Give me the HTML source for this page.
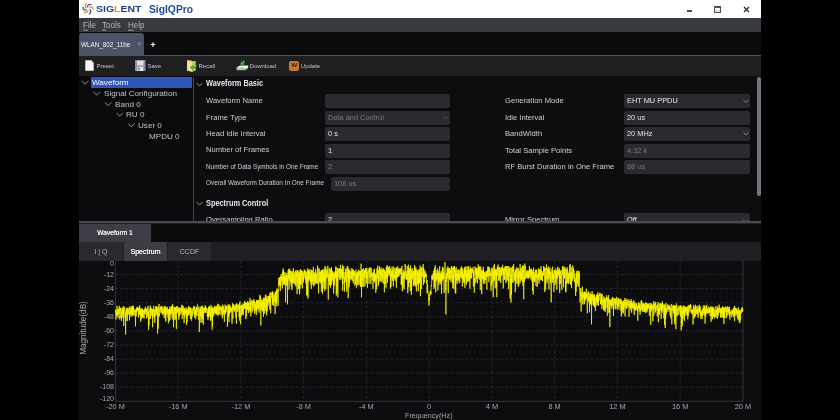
<!DOCTYPE html>
<html><head><meta charset="utf-8">
<style>
*{margin:0;padding:0;box-sizing:border-box}
html,body{width:840px;height:420px;overflow:hidden;background:#000}
body{position:relative;font-family:"Liberation Sans",sans-serif}
.a{position:absolute;white-space:nowrap}
#app{position:absolute;left:79px;top:0;width:682px;height:420px;background:#0d0d10;overflow:hidden;will-change:transform}
/* everything inside uses page coords via offset wrapper */
.pg{position:absolute;left:-79px;top:0;width:840px;height:420px}
.hdr{left:79px;top:0;width:682px;height:18px;background:#fff}
.menu{left:79px;top:18px;width:682px;height:14px;background:#373b3f}
.mi{top:19.2px;height:14px;line-height:14px;font-size:8px;color:#b4b8bd;transform:scaleY(1.2)}
.mi u{text-decoration:underline;text-decoration-color:#8a8e93;text-underline-offset:1px;text-decoration-thickness:0.8px}
.tabbar{left:79px;top:32px;width:682px;height:23px;background:#0c0c0e}
.tab{left:79px;top:33px;width:65px;height:22px;background:#4a5466;border-radius:3px 3px 0 0}
.tabline{left:79px;top:55px;width:682px;height:1px;background:#4a5466}
.toolbar{left:79px;top:56px;width:682px;height:20px;background:#1f1f22}
.tl{top:60px;height:12px;line-height:12px;font-size:6px;color:#c4c4c8}
.tree{left:79px;top:76px;width:114px;height:146px;background:#0b0b0d}
.vdiv{left:193.2px;top:76.5px;width:1.3px;height:146px;background:#45474f}
.tr{height:11px;line-height:11px;font-size:8.1px;color:#c2c2c6}
.chev{width:6px;height:6px}
.sel{left:91px;top:77px;width:101.2px;height:11px;background:#2f55b6}
.set{left:194px;top:76px;width:567px;height:146px;background:#0d0d10}
.lb{height:12px;line-height:12px;font-size:7.6px;color:#d0d0d4}
.lbs{height:12px;line-height:12px;font-size:6.4px;color:#d0d0d4}
.hd{height:12px;line-height:12px;font-size:8.2px;font-weight:bold;color:#e8e8ec;transform:scaleX(0.9);transform-origin:0 50%}
.inp{height:14px;background:#2a2a2f;border-radius:2px;font-size:7.4px;line-height:14px;padding-left:3px;color:#e6e6ea}
.dis{color:#78787e}
.scroll{left:757px;top:77px;width:3.6px;height:119px;background:#74767e;border-radius:2px}
.hdiv{left:79px;top:221px;width:682px;height:2px;background:#474b53}
.btabs{left:79px;top:223px;width:682px;height:19px;background:#0b0b0d;border-top:1px solid #222328}
.wtab{left:79px;top:224px;width:72px;height:18px;background:#3e3f46;font-size:6.6px;line-height:18px;text-align:center;color:#f4f4f6;text-shadow:0 0 0.3px #fff}
.stabs{left:79px;top:242px;width:682px;height:19px;background:#1f1f23}
.st{top:242px;height:19px;line-height:19.5px;font-size:7px;text-align:center;color:#b8b8bc;background:#2a2a2e}
.chart{left:79px;top:261px;width:682px;height:159px;background:#0d0d10}
.yl{position:absolute;left:74px;width:40px;text-align:right;font-size:7px;line-height:10px;color:#a8a8ac}
.xl{position:absolute;top:402px;width:60px;text-align:center;font-size:7.4px;line-height:10px;color:#a8a8ac}
</style></head><body>
<div id="app"><div class="pg">
<div class="a hdr"></div>
<!-- logo -->
<svg class="a" style="left:0;top:0" width="840" height="20" viewBox="0 0 840 20">
 <g fill="none" stroke-width="1.3" stroke-linecap="round">
<path d="M86.04 8.05 Q84.08 5.90 86.52 3.73" stroke="#f0902a"/>
<path d="M87.42 6.78 Q87.95 3.92 91.16 4.57" stroke="#2f5aa8"/>
<path d="M89.35 7.19 Q92.02 6.04 93.27 9.05" stroke="#f0902a"/>
<path d="M89.93 9.62 Q91.82 11.83 89.30 13.92" stroke="#2f5aa8"/>
<path d="M88.00 10.90 Q86.70 13.50 83.80 12.00" stroke="#f0902a"/>
<path d="M86.30 10.03 Q83.43 10.51 82.94 7.28" stroke="#2f5aa8"/>
 </g>
</svg>
<div class="a" style="left:95.5px;top:3px;height:12px;line-height:12px;font-size:9.8px;font-weight:bold;color:#1f3f8c;transform-origin:0 50%;transform:scaleX(1.07)">SIG<span style="color:#ee8a22">L</span>ENT</div>
<div class="a" style="left:148.5px;top:2px;height:14px;line-height:14px;font-size:11.2px;font-weight:bold;color:#1f4c9c;transform-origin:0 50%;transform:scaleX(0.92)">SigIQPro</div>
<!-- window controls -->
<div class="a" style="left:687px;top:10.2px;width:5px;height:1.8px;background:#4a4a4a"></div>
<div class="a" style="left:714.2px;top:5.8px;width:7px;height:6.8px;border:1px solid #505050;border-top-width:2px;background:linear-gradient(#fff,#d8d8d8)"></div>
<svg class="a" style="left:743px;top:6px" width="7" height="7" viewBox="0 0 7 7"><path d="M1 1L6 6M6 1L1 6" stroke="#2a2a2a" stroke-width="1.3"/></svg>

<div class="a menu"></div>
<div class="a mi" style="left:83px"><u>F</u>ile</div>
<div class="a mi" style="left:102px"><u>T</u>ools</div>
<div class="a mi" style="left:128px"><u>H</u>elp</div>

<div class="a tabbar"></div>
<div class="a tab"></div>
<div class="a" style="left:81px;top:38.5px;height:12px;line-height:12px;font-size:6.3px;color:#f0f0f4">WLAN_802_11be</div>
<div class="a" style="left:137.3px;top:38.3px;height:12px;line-height:12px;font-size:7.6px;color:#9aa0a8">×</div>
<div class="a" style="left:150.5px;top:38.5px;height:12px;line-height:12px;font-size:8.5px;font-weight:bold;color:#fff">+</div>
<div class="a tabline"></div>

<div class="a toolbar"></div>
<!-- preset icon -->
<svg class="a" style="left:85px;top:60px" width="9" height="11" viewBox="0 0 9 11"><path d="M0.3 0.3H6.2L8.7 2.8V10.7H0.3Z" fill="#f6f6f6"/><path d="M6.2 0.3V2.8H8.7" fill="#cfcfcf"/></svg>
<div class="a tl" style="left:96.5px">Preset</div>
<!-- save icon -->
<svg class="a" style="left:135px;top:60px" width="10.5" height="11" viewBox="0 0 10.5 11"><rect x="0" y="0" width="10.5" height="11" rx="0.8" fill="#7f93b4"/><rect x="2" y="0.8" width="6.5" height="4.6" fill="#f6d8d0"/><rect x="2.2" y="6.8" width="6" height="4.2" fill="#e6e8ee"/><rect x="3.2" y="7.6" width="1.4" height="2.6" fill="#56606e"/></svg>
<div class="a tl" style="left:147.5px">Save</div>
<!-- recall icon -->
<svg class="a" style="left:186px;top:59px" width="12" height="14" viewBox="0 0 12 14">
 <path d="M1 1.2H5.5L6.2 2H9.5V11.5H1Z" fill="#c9a449"/>
 <path d="M1 1.2L6 2.8V13L1 11.5Z" fill="#f3df8e"/>
 <path d="M6 2.8L9.5 2V11.5L6 13Z" fill="#dcbb5c"/>
 <path d="M10.8 5.2C10.8 8 9.4 9.6 7.2 9.8V11.4L3.8 8.4L7.2 5.4V7.2C8.6 7.1 9.6 6.4 10.8 5.2Z" fill="#3fb83a"/>
</svg>
<div class="a tl" style="left:198.5px">Recall</div>
<!-- download icon -->
<svg class="a" style="left:236px;top:60px" width="13" height="11" viewBox="0 0 13 11">
 <path d="M0.8 7.2L4 5.4H12.2V7.4L8.8 9.4H0.8Z" fill="#eceef0"/>
 <path d="M0.8 7.6H8.8V10.2H0.8Z" fill="#b9bcc2"/>
 <path d="M8.8 9.4L12.2 7.4V8.4L8.8 10.4Z" fill="#9a9ea6"/>
 <rect x="6" y="8.6" width="1" height="0.8" fill="#3fb83a"/>
 <path d="M9.2 0.4C9.6 2.8 8.6 4.2 6.8 4.4V5.8L3.8 3.2L6.8 0.8V2.2C8 2.1 8.8 1.5 9.2 0.4Z" fill="#3fb83a" transform="rotate(-30 6.5 3)"/>
</svg>
<div class="a tl" style="left:249.5px">Download</div>
<!-- update icon -->
<div class="a" style="left:289px;top:60.8px;width:10px;height:9.8px;background:#c77b30;border-radius:2px"></div>
<div class="a" style="left:289.3px;top:60.8px;width:10px;height:9.8px;font-size:6px;line-height:9.8px;text-align:center;font-weight:bold;color:#2e1804">W</div>
<div class="a tl" style="left:300.8px">Update</div>

<!-- tree -->
<div class="a tree"></div>
<div class="a sel"></div>

<div class="a tr" style="left:92px;top:77px;color:#fff">Waveform</div>
<div class="a tr" style="left:104px;top:88px">Signal Configuration</div>
<div class="a tr" style="left:115px;top:98.5px">Band 0</div>
<div class="a tr" style="left:126px;top:109px">RU 0</div>
<div class="a tr" style="left:138px;top:120px">User 0</div>
<div class="a tr" style="left:149px;top:130.5px">MPDU 0</div>

<!-- settings -->
<div class="a" style="left:194px;top:76px;width:567px;height:146px;background:#0d0d10"></div>

<div class="a hd" style="left:206px;top:78px">Waveform Basic</div>
<div class="a lb" style="left:206px;top:95px">Waveform Name</div>
<div class="a lb" style="left:206px;top:111.5px">Frame Type</div>
<div class="a lb" style="left:206px;top:127.5px">Head Idle Interval</div>
<div class="a lb" style="left:206px;top:144px">Number of Frames</div>
<div class="a lbs" style="left:206px;top:160.5px">Number of Data Symbols in One Frame</div>
<div class="a lbs" style="left:206px;top:177px">Overall Waveform Duration In One Frame</div>
<div class="a hd" style="left:206px;top:198px">Spectrum Control</div>
<div class="a lb" style="left:206px;top:213.8px">Oversampling Ratio</div>

<div class="a inp" style="left:325px;top:94px;width:125px"></div>
<div class="a inp dis" style="left:325px;top:110.5px;width:125px">Data and Control</div>
<div class="a inp" style="left:325px;top:127px;width:125px">0 s</div>
<div class="a inp" style="left:325px;top:143.5px;width:125px">1</div>
<div class="a inp dis" style="left:325px;top:160px;width:125px">2</div>
<div class="a inp dis" style="left:331px;top:176.5px;width:119px">108 us</div>
<div class="a inp" style="left:325px;top:213px;width:125px">2</div>

<div class="a lb" style="left:505px;top:95.2px">Generation Mode</div>
<div class="a lb" style="left:505px;top:111.7px">Idle Interval</div>
<div class="a lb" style="left:505px;top:128.2px">BandWidth</div>
<div class="a lb" style="left:505px;top:145.2px">Total Sample Points</div>
<div class="a lb" style="left:505px;top:161.2px">RF Burst Duration in One Frame</div>
<div class="a lb" style="left:505px;top:213.8px">Mirror Spectrum</div>

<div class="a inp" style="left:624px;top:94px;width:126px">EHT MU PPDU</div>
<div class="a inp" style="left:624px;top:110.5px;width:126px">20 us</div>
<div class="a inp" style="left:624px;top:127px;width:126px">20 MHz</div>
<div class="a inp dis" style="left:624px;top:143.5px;width:126px">4.32 k</div>
<div class="a inp dis" style="left:624px;top:160px;width:126px">88 us</div>
<div class="a inp" style="left:624px;top:213px;width:126px">Off</div>
<div class="a scroll"></div>
<div class="a vdiv"></div>
<svg class="a" style="left:0;top:0" width="840" height="420" viewBox="0 0 840 420">
 <g fill="none" stroke="#9a9aa0" stroke-width="0.9">
  <path d="M82 80.8 L85.2 84.2 L88.4 80.8"/>
  <path d="M93.5 91.8 L96.7 95.2 L99.9 91.8"/>
  <path d="M105 102.3 L108.2 105.7 L111.4 102.3"/>
  <path d="M116.5 112.8 L119.7 116.2 L122.9 112.8"/>
  <path d="M128 123.5 L131.2 126.9 L134.4 123.5"/>
  <path d="M196.5 83 L199.5 86 L202.5 83"/>
  <path d="M196.5 202 L199.5 205 L202.5 202"/>
 </g>
 <g fill="none" stroke="#8a8a90" stroke-width="0.9">
  <path d="M743.5 100 L746 102.5 L748.5 100"/>
  <path d="M743.5 132.5 L746 135 L748.5 132.5"/>
  <path d="M443 116.5 L445.5 119 L448 116.5" stroke="#55555c"/>
  <path d="M743.5 220 L746 222.5 L748.5 220"/>
 </g>
</svg>

<div class="a hdiv"></div>
<div class="a btabs"></div>
<div class="a wtab">Waveform 1</div>
<div class="a stabs"></div>
<div class="a st" style="left:79px;width:44px">I | Q</div>
<div class="a st" style="left:124px;width:43px;background:#3c3c42;color:#fafafc;text-shadow:0 0 0.4px #fff">Spectrum</div>
<div class="a st" style="left:168px;width:43px">CCDF</div>

<div class="a chart"></div>
<svg class="a" style="left:0;top:0" width="840" height="420" viewBox="0 0 840 420">
 <g stroke="#26262b" stroke-width="1" stroke-dasharray="3,2">
<line x1="115.4" y1="274.6" x2="742.9" y2="274.6"/>
<line x1="115.4" y1="288.7" x2="742.9" y2="288.7"/>
<line x1="115.4" y1="302.7" x2="742.9" y2="302.7"/>
<line x1="115.4" y1="316.8" x2="742.9" y2="316.8"/>
<line x1="115.4" y1="330.9" x2="742.9" y2="330.9"/>
<line x1="115.4" y1="345.0" x2="742.9" y2="345.0"/>
<line x1="115.4" y1="359.1" x2="742.9" y2="359.1"/>
<line x1="115.4" y1="373.1" x2="742.9" y2="373.1"/>
<line x1="115.4" y1="387.2" x2="742.9" y2="387.2"/>
<line x1="178.2" y1="260.5" x2="178.2" y2="401.3"/>
<line x1="240.9" y1="260.5" x2="240.9" y2="401.3"/>
<line x1="303.6" y1="260.5" x2="303.6" y2="401.3"/>
<line x1="366.4" y1="260.5" x2="366.4" y2="401.3"/>
<line x1="429.1" y1="260.5" x2="429.1" y2="401.3"/>
<line x1="491.9" y1="260.5" x2="491.9" y2="401.3"/>
<line x1="554.6" y1="260.5" x2="554.6" y2="401.3"/>
<line x1="617.4" y1="260.5" x2="617.4" y2="401.3"/>
<line x1="680.1" y1="260.5" x2="680.1" y2="401.3"/>
 </g>
 <path d="M115.4 260.5 V401.3 H742.9 V260.5" fill="none" stroke="#3a3a40" stroke-width="0.9"/>
 <polyline points="115.4,312.6 115.6,309.7 115.7,310.6 115.9,318.2 116.0,319.5 116.2,317.6 116.3,311.6 116.5,315.8 116.7,309.9 116.8,310.3 117.0,305.9 117.1,307.8 117.3,315.3 117.4,312.8 117.6,314.6 117.8,309.8 117.9,310.5 118.1,318.1 118.2,309.4 118.4,312.7 118.5,311.3 118.7,308.5 118.9,313.6 119.0,310.7 119.2,309.0 119.3,305.8 119.5,311.7 119.6,315.2 119.8,319.4 119.9,308.7 120.1,307.7 120.3,309.3 120.4,310.3 120.6,308.0 120.7,311.1 120.9,318.0 121.0,309.7 121.2,308.2 121.4,312.0 121.5,321.0 121.7,314.8 121.8,318.1 122.0,315.7 122.1,311.9 122.3,317.2 122.5,310.5 122.6,308.2 122.8,313.1 122.9,312.2 123.1,306.4 123.2,314.7 123.4,313.8 123.6,310.2 123.7,326.1 123.9,312.1 124.0,306.5 124.2,310.8 124.3,309.5 124.5,307.4 124.7,307.7 124.8,311.9 125.0,316.4 125.1,318.0 125.3,314.1 125.4,312.4 125.6,334.6 125.8,316.5 125.9,320.7 126.1,310.0 126.2,313.5 126.4,312.2 126.5,307.9 126.7,311.2 126.9,317.0 127.0,312.4 127.2,308.1 127.3,321.0 127.5,310.7 127.6,310.5 127.8,310.7 128.0,307.8 128.1,313.4 128.3,314.9 128.4,310.6 128.6,312.5 128.7,308.3 128.9,307.9 129.0,308.2 129.2,313.8 129.4,312.3 129.5,320.4 129.7,313.4 129.8,306.4 130.0,306.8 130.1,306.5 130.3,313.9 130.5,314.3 130.6,309.9 130.8,308.0 130.9,309.6 131.1,317.0 131.2,307.2 131.4,308.8 131.6,314.6 131.7,312.5 131.9,306.0 132.0,311.8 132.2,309.1 132.3,315.7 132.5,307.3 132.7,315.3 132.8,305.7 133.0,312.3 133.1,315.6 133.3,306.1 133.4,310.7 133.6,311.5 133.8,308.1 133.9,313.5 134.1,313.6 134.2,313.4 134.4,315.6 134.5,312.3 134.7,310.2 134.9,311.6 135.0,310.9 135.2,310.7 135.3,311.4 135.5,326.3 135.6,314.8 135.8,309.0 136.0,312.6 136.1,310.4 136.3,316.3 136.4,313.5 136.6,308.6 136.7,310.4 136.9,307.2 137.0,310.0 137.2,310.8 137.4,311.3 137.5,311.1 137.7,309.3 137.8,306.7 138.0,310.4 138.1,308.0 138.3,315.9 138.5,317.5 138.6,317.5 138.8,308.5 138.9,315.1 139.1,309.6 139.2,307.5 139.4,313.9 139.6,311.8 139.7,305.3 139.9,315.0 140.0,310.7 140.2,314.3 140.3,309.1 140.5,310.4 140.7,321.7 140.8,309.9 141.0,317.9 141.1,308.5 141.3,316.3 141.4,319.3 141.6,313.2 141.8,311.6 141.9,308.2 142.1,315.2 142.2,310.3 142.4,316.8 142.5,309.3 142.7,317.5 142.9,309.8 143.0,317.0 143.2,317.7 143.3,311.3 143.5,310.4 143.6,313.2 143.8,310.6 144.0,316.2 144.1,318.6 144.3,312.7 144.4,308.7 144.6,310.9 144.7,312.3 144.9,313.5 145.0,308.9 145.2,314.4 145.4,306.8 145.5,308.2 145.7,310.9 145.8,311.8 146.0,309.3 146.1,312.4 146.3,309.2 146.5,311.7 146.6,318.4 146.8,317.6 146.9,313.4 147.1,317.0 147.2,307.6 147.4,313.1 147.6,312.9 147.7,315.0 147.9,313.3 148.0,305.9 148.2,313.6 148.3,312.7 148.5,330.1 148.7,311.1 148.8,314.2 149.0,325.6 149.1,316.8 149.3,319.2 149.4,312.8 149.6,310.1 149.8,308.8 149.9,309.1 150.1,311.9 150.2,305.5 150.4,309.0 150.5,319.0 150.7,307.4 150.9,308.9 151.0,315.4 151.2,310.8 151.3,308.3 151.5,310.1 151.6,309.3 151.8,313.8 152.0,315.6 152.1,316.3 152.3,310.3 152.4,309.8 152.6,327.3 152.7,308.8 152.9,310.5 153.0,317.7 153.2,313.4 153.4,313.2 153.5,314.1 153.7,305.8 153.8,311.9 154.0,309.3 154.1,309.9 154.3,317.3 154.5,313.4 154.6,312.8 154.8,322.8 154.9,313.2 155.1,309.2 155.2,312.9 155.4,311.1 155.6,315.9 155.7,314.2 155.9,306.7 156.0,311.2 156.2,306.0 156.3,313.2 156.5,306.5 156.7,310.1 156.8,310.6 157.0,315.5 157.1,310.7 157.3,309.1 157.4,307.3 157.6,333.5 157.8,311.2 157.9,315.4 158.1,312.6 158.2,328.7 158.4,307.9 158.5,306.8 158.7,307.2 158.9,312.0 159.0,304.0 159.2,312.1 159.3,313.1 159.5,316.4 159.6,313.0 159.8,313.4 160.0,310.7 160.1,312.0 160.3,307.4 160.4,309.7 160.6,306.6 160.7,309.0 160.9,308.9 161.1,308.7 161.2,312.9 161.4,306.8 161.5,311.0 161.7,312.8 161.8,305.7 162.0,309.5 162.1,310.3 162.3,314.8 162.5,314.0 162.6,310.8 162.8,307.1 162.9,311.2 163.1,314.3 163.2,312.3 163.4,313.6 163.6,310.2 163.7,308.7 163.9,311.6 164.0,311.9 164.2,317.9 164.3,306.0 164.5,310.7 164.7,307.6 164.8,313.1 165.0,311.7 165.1,306.3 165.3,307.5 165.4,319.9 165.6,307.2 165.8,321.7 165.9,306.8 166.1,307.7 166.2,313.4 166.4,315.0 166.5,309.2 166.7,308.9 166.9,308.5 167.0,310.3 167.2,308.4 167.3,306.9 167.5,312.7 167.6,313.4 167.8,309.1 168.0,317.5 168.1,310.0 168.3,313.8 168.4,323.3 168.6,311.1 168.7,309.5 168.9,311.0 169.1,313.4 169.2,309.0 169.4,321.1 169.5,309.3 169.7,313.3 169.8,306.8 170.0,319.7 170.1,311.4 170.3,314.2 170.5,308.7 170.6,314.0 170.8,312.6 170.9,313.6 171.1,308.5 171.2,306.3 171.4,314.3 171.6,311.5 171.7,306.3 171.9,311.7 172.0,305.7 172.2,318.4 172.3,311.7 172.5,307.3 172.7,304.2 172.8,312.4 173.0,306.6 173.1,319.9 173.3,311.8 173.4,312.3 173.6,327.2 173.8,312.1 173.9,315.7 174.1,314.0 174.2,307.9 174.4,311.3 174.5,310.9 174.7,306.8 174.9,312.0 175.0,320.1 175.2,308.0 175.3,319.2 175.5,317.8 175.6,313.2 175.8,307.1 176.0,313.0 176.1,309.7 176.3,308.9 176.4,328.9 176.6,306.8 176.7,306.4 176.9,313.5 177.1,306.1 177.2,311.7 177.4,311.3 177.5,306.6 177.7,308.1 177.8,307.9 178.0,309.7 178.2,312.4 178.3,308.3 178.5,314.1 178.6,313.3 178.8,319.7 178.9,312.3 179.1,307.2 179.2,313.1 179.4,316.4 179.6,308.9 179.7,313.5 179.9,309.6 180.0,308.5 180.2,309.2 180.3,307.7 180.5,310.0 180.7,308.6 180.8,313.3 181.0,314.9 181.1,309.9 181.3,311.6 181.4,310.5 181.6,308.0 181.8,304.8 181.9,310.8 182.1,307.6 182.2,319.1 182.4,315.7 182.5,305.6 182.7,306.5 182.9,307.4 183.0,313.1 183.2,306.2 183.3,309.8 183.5,313.7 183.6,315.2 183.8,313.2 184.0,309.3 184.1,323.0 184.3,309.1 184.4,312.4 184.6,308.0 184.7,317.7 184.9,311.5 185.1,309.4 185.2,314.7 185.4,311.4 185.5,312.5 185.7,312.4 185.8,311.9 186.0,307.3 186.2,311.8 186.3,308.6 186.5,325.0 186.6,311.2 186.8,311.4 186.9,310.9 187.1,322.2 187.2,309.3 187.4,316.6 187.6,311.7 187.7,315.0 187.9,310.3 188.0,316.0 188.2,307.9 188.3,314.0 188.5,306.2 188.7,310.6 188.8,306.5 189.0,306.8 189.1,307.7 189.3,308.0 189.4,311.4 189.6,307.6 189.8,313.6 189.9,310.3 190.1,315.5 190.2,308.6 190.4,319.0 190.5,308.3 190.7,307.5 190.9,309.6 191.0,309.4 191.2,311.2 191.3,311.1 191.5,310.9 191.6,320.7 191.8,310.5 192.0,308.2 192.1,310.8 192.3,310.7 192.4,315.4 192.6,316.4 192.7,310.3 192.9,309.2 193.1,308.4 193.2,310.3 193.4,310.4 193.5,305.9 193.7,307.2 193.8,308.4 194.0,314.0 194.2,310.4 194.3,306.5 194.5,307.9 194.6,317.5 194.8,308.2 194.9,306.7 195.1,307.6 195.2,310.3 195.4,313.7 195.6,310.3 195.7,319.3 195.9,314.5 196.0,308.8 196.2,314.4 196.3,315.6 196.5,309.2 196.7,307.0 196.8,309.6 197.0,315.9 197.1,309.2 197.3,307.7 197.4,304.4 197.6,311.6 197.8,310.8 197.9,308.2 198.1,307.5 198.2,309.1 198.4,309.5 198.5,319.6 198.7,314.7 198.9,310.9 199.0,306.6 199.2,313.3 199.3,332.0 199.5,315.8 199.6,313.3 199.8,309.5 200.0,309.2 200.1,315.0 200.3,313.0 200.4,316.2 200.6,306.9 200.7,311.1 200.9,322.8 201.1,309.6 201.2,308.9 201.4,305.9 201.5,312.9 201.7,318.6 201.8,311.0 202.0,317.7 202.2,322.6 202.3,305.8 202.5,313.7 202.6,310.1 202.8,307.4 202.9,312.1 203.1,318.3 203.2,307.7 203.4,324.6 203.6,308.0 203.7,308.0 203.9,313.2 204.0,313.1 204.2,311.7 204.3,308.4 204.5,308.3 204.7,309.6 204.8,307.6 205.0,312.6 205.1,305.2 205.3,306.6 205.4,312.6 205.6,307.9 205.8,307.9 205.9,306.6 206.1,312.9 206.2,308.9 206.4,308.6 206.5,310.3 206.7,308.3 206.9,310.6 207.0,309.4 207.2,313.3 207.3,316.7 207.5,314.6 207.6,315.6 207.8,311.5 208.0,319.8 208.1,308.3 208.3,308.2 208.4,317.2 208.6,311.3 208.7,307.1 208.9,317.2 209.1,306.0 209.2,315.6 209.4,315.4 209.5,306.8 209.7,308.7 209.8,308.7 210.0,315.8 210.2,307.6 210.3,311.7 210.5,320.8 210.6,312.1 210.8,311.1 210.9,304.9 211.1,306.6 211.3,319.5 211.4,310.4 211.6,311.3 211.7,309.5 211.9,306.5 212.0,306.9 212.2,329.5 212.3,307.5 212.5,325.7 212.7,309.8 212.8,313.6 213.0,311.3 213.1,312.3 213.3,312.0 213.4,308.0 213.6,315.3 213.8,316.3 213.9,308.0 214.1,308.6 214.2,310.6 214.4,306.0 214.5,306.0 214.7,313.1 214.9,305.8 215.0,310.8 215.2,312.6 215.3,309.3 215.5,307.4 215.6,311.1 215.8,314.1 216.0,308.2 216.1,313.7 216.3,307.1 216.4,314.7 216.6,305.9 216.7,313.3 216.9,307.7 217.1,314.0 217.2,312.3 217.4,309.3 217.5,311.3 217.7,304.2 217.8,315.4 218.0,315.4 218.2,303.8 218.3,307.4 218.5,313.1 218.6,315.2 218.8,310.5 218.9,310.4 219.1,307.7 219.3,308.2 219.4,314.2 219.6,310.3 219.7,305.4 219.9,308.7 220.0,310.1 220.2,307.4 220.3,306.9 220.5,306.1 220.7,308.0 220.8,311.2 221.0,315.4 221.1,306.7 221.3,308.1 221.4,310.0 221.6,308.2 221.8,307.7 221.9,313.2 222.1,306.7 222.2,309.3 222.4,318.4 222.5,313.6 222.7,304.6 222.9,315.2 223.0,308.8 223.2,309.0 223.3,306.1 223.5,310.0 223.6,312.6 223.8,310.1 224.0,314.4 224.1,310.5 224.3,311.5 224.4,321.8 224.6,309.8 224.7,310.5 224.9,312.2 225.1,304.5 225.2,312.3 225.4,310.0 225.5,314.2 225.7,306.1 225.8,309.2 226.0,312.1 226.2,310.4 226.3,306.0 226.5,309.2 226.6,308.4 226.8,305.8 226.9,305.5 227.1,310.1 227.3,309.5 227.4,326.8 227.6,311.2 227.7,310.9 227.9,309.4 228.0,307.3 228.2,304.4 228.4,316.8 228.5,304.7 228.7,313.6 228.8,307.5 229.0,322.0 229.1,307.2 229.3,314.7 229.4,311.7 229.6,310.2 229.8,304.6 229.9,312.9 230.1,307.6 230.2,307.0 230.4,305.9 230.5,312.3 230.7,308.2 230.9,309.1 231.0,307.9 231.2,311.6 231.3,308.5 231.5,308.7 231.6,308.5 231.8,308.0 232.0,323.7 232.1,308.7 232.3,306.8 232.4,309.6 232.6,303.2 232.7,307.0 232.9,318.8 233.1,306.6 233.2,310.0 233.4,308.1 233.5,304.2 233.7,306.2 233.8,309.9 234.0,309.5 234.2,307.9 234.3,311.7 234.5,308.9 234.6,305.0 234.8,304.9 234.9,308.0 235.1,308.0 235.3,306.6 235.4,309.8 235.6,310.2 235.7,306.7 235.9,317.4 236.0,304.1 236.2,316.6 236.4,323.7 236.5,303.5 236.7,306.4 236.8,303.6 237.0,306.7 237.1,305.9 237.3,306.1 237.4,306.2 237.6,305.2 237.8,311.9 237.9,305.1 238.1,306.2 238.2,304.5 238.4,307.0 238.5,309.8 238.7,309.6 238.9,306.2 239.0,316.0 239.2,317.2 239.3,304.5 239.5,303.1 239.6,320.6 239.8,306.5 240.0,301.5 240.1,308.3 240.3,306.0 240.4,312.2 240.6,324.3 240.7,313.0 240.9,314.1 241.1,312.7 241.2,305.1 241.4,305.0 241.5,316.1 241.7,305.1 241.8,304.9 242.0,305.9 242.2,307.5 242.3,310.0 242.5,312.2 242.6,305.6 242.8,314.3 242.9,304.7 243.1,303.3 243.3,315.2 243.4,306.1 243.6,305.1 243.7,303.9 243.9,305.4 244.0,307.6 244.2,304.0 244.4,303.9 244.5,309.1 244.7,300.9 244.8,303.4 245.0,305.6 245.1,303.3 245.3,308.7 245.4,302.5 245.6,304.7 245.8,302.3 245.9,319.1 246.1,307.2 246.2,303.2 246.4,316.1 246.5,303.2 246.7,305.6 246.9,302.7 247.0,304.4 247.2,307.9 247.3,305.6 247.5,310.1 247.6,301.3 247.8,305.0 248.0,306.4 248.1,309.0 248.3,303.1 248.4,313.1 248.6,303.2 248.7,305.1 248.9,301.8 249.1,306.1 249.2,310.0 249.4,310.2 249.5,307.3 249.7,306.8 249.8,310.9 250.0,298.0 250.2,312.1 250.3,302.7 250.5,304.6 250.6,305.3 250.8,316.3 250.9,301.6 251.1,304.7 251.3,302.6 251.4,300.1 251.6,302.0 251.7,308.4 251.9,309.3 252.0,312.7 252.2,304.6 252.4,305.6 252.5,300.6 252.7,304.0 252.8,311.1 253.0,308.0 253.1,303.5 253.3,303.2 253.5,305.4 253.6,299.0 253.8,308.5 253.9,307.8 254.1,300.3 254.2,301.1 254.4,301.7 254.5,303.1 254.7,313.7 254.9,301.9 255.0,302.7 255.2,303.5 255.3,311.1 255.5,307.5 255.6,304.5 255.8,307.7 256.0,302.4 256.1,301.9 256.3,315.0 256.4,307.9 256.6,300.1 256.7,309.7 256.9,311.1 257.1,300.3 257.2,304.4 257.4,300.4 257.5,302.4 257.7,307.5 257.8,301.5 258.0,309.2 258.2,306.6 258.3,308.8 258.5,299.8 258.6,308.5 258.8,305.6 258.9,309.9 259.1,312.6 259.3,301.5 259.4,303.5 259.6,306.4 259.7,304.7 259.9,294.7 260.0,310.3 260.2,298.5 260.4,300.5 260.5,296.3 260.7,299.5 260.8,325.4 261.0,302.4 261.1,303.4 261.3,306.6 261.5,308.5 261.6,299.6 261.8,306.9 261.9,310.2 262.1,302.4 262.2,306.5 262.4,300.0 262.5,301.3 262.7,311.1 262.9,303.2 263.0,311.7 263.2,304.0 263.3,297.8 263.5,316.7 263.6,302.1 263.8,304.9 264.0,298.0 264.1,306.9 264.3,313.7 264.4,302.1 264.6,308.1 264.7,297.9 264.9,303.6 265.1,302.7 265.2,310.7 265.4,295.2 265.5,300.9 265.7,300.6 265.8,294.6 266.0,305.8 266.2,304.3 266.3,313.2 266.5,298.5 266.6,315.3 266.8,299.7 266.9,298.3 267.1,296.1 267.3,311.3 267.4,300.4 267.6,303.3 267.7,301.3 267.9,299.1 268.0,306.0 268.2,297.2 268.4,296.1 268.5,301.2 268.7,295.8 268.8,301.0 269.0,296.5 269.1,303.3 269.3,300.3 269.5,295.9 269.6,295.7 269.8,309.7 269.9,292.9 270.1,302.8 270.2,297.5 270.4,298.6 270.5,299.7 270.7,313.3 270.9,292.0 271.0,292.9 271.2,295.0 271.3,293.8 271.5,296.8 271.6,296.3 271.8,297.8 272.0,296.8 272.1,297.9 272.3,291.9 272.4,300.7 272.6,305.0 272.7,291.4 272.9,301.1 273.1,297.2 273.2,304.6 273.4,300.4 273.5,300.4 273.7,305.9 273.8,293.1 274.0,296.3 274.2,301.9 274.3,297.4 274.5,295.5 274.6,299.5 274.8,301.1 274.9,298.1 275.1,314.1 275.3,291.9 275.4,295.6 275.6,299.4 275.7,299.1 275.9,302.1 276.0,291.2 276.2,306.3 276.4,296.5 276.5,303.5 276.7,288.8 276.8,301.7 277.0,297.4 277.1,293.9 277.3,291.2 277.5,292.2 277.6,291.8 277.8,291.3 277.9,289.1 278.1,305.9 278.2,293.5 278.4,287.5 278.6,284.6 278.7,277.9 278.9,284.7 279.0,283.3 279.2,285.8 279.3,281.5 279.5,284.9 279.6,277.0 279.8,282.5 280.0,284.6 280.1,280.3 280.3,290.9 280.4,283.7 280.6,276.1 280.7,286.0 280.9,282.0 281.1,279.4 281.2,273.9 281.4,279.5 281.5,279.7 281.7,277.3 281.8,281.8 282.0,281.8 282.2,277.0 282.3,288.4 282.5,280.6 282.6,278.0 282.8,271.3 282.9,279.7 283.1,268.6 283.3,278.2 283.4,284.8 283.6,270.1 283.7,278.1 283.9,272.5 284.0,273.7 284.2,272.5 284.4,284.8 284.5,277.7 284.7,283.6 284.8,276.0 285.0,279.9 285.1,275.7 285.3,278.8 285.5,280.5 285.6,302.4 285.8,272.6 285.9,275.0 286.1,277.2 286.2,281.0 286.4,276.6 286.6,276.0 286.7,285.1 286.9,273.4 287.0,285.9 287.2,276.5 287.3,275.2 287.5,304.3 287.6,279.4 287.8,278.8 288.0,280.4 288.1,270.6 288.3,278.8 288.4,278.1 288.6,270.8 288.7,268.9 288.9,274.7 289.1,289.5 289.2,271.3 289.4,270.4 289.5,279.3 289.7,268.7 289.8,269.0 290.0,277.7 290.2,281.0 290.3,270.7 290.5,272.0 290.6,282.2 290.8,281.8 290.9,279.3 291.1,284.3 291.3,277.6 291.4,287.1 291.6,271.3 291.7,280.2 291.9,279.3 292.0,290.1 292.2,278.2 292.4,272.9 292.5,279.5 292.7,283.5 292.8,271.0 293.0,282.3 293.1,272.6 293.3,268.2 293.5,268.4 293.6,280.3 293.8,283.3 293.9,279.5 294.1,274.3 294.2,279.8 294.4,280.6 294.6,283.5 294.7,274.9 294.9,271.8 295.0,273.3 295.2,278.4 295.3,285.3 295.5,270.5 295.6,273.2 295.8,274.5 296.0,275.3 296.1,286.6 296.3,280.1 296.4,272.4 296.6,276.7 296.7,271.6 296.9,270.2 297.1,294.0 297.2,273.1 297.4,276.5 297.5,272.6 297.7,270.4 297.8,273.5 298.0,283.6 298.2,272.1 298.3,288.9 298.5,281.8 298.6,278.3 298.8,289.0 298.9,273.3 299.1,270.5 299.3,272.3 299.4,276.1 299.6,294.3 299.7,271.4 299.9,288.5 300.0,273.7 300.2,279.5 300.4,271.2 300.5,269.0 300.7,285.0 300.8,276.7 301.0,270.6 301.1,284.7 301.3,276.2 301.5,272.5 301.6,270.5 301.8,275.7 301.9,272.4 302.1,274.9 302.2,282.9 302.4,288.3 302.6,270.9 302.7,274.4 302.9,273.2 303.0,279.3 303.2,277.2 303.3,280.5 303.5,282.5 303.6,272.7 303.8,279.4 304.0,275.8 304.1,277.3 304.3,269.5 304.4,274.1 304.6,270.7 304.7,271.5 304.9,272.8 305.1,275.5 305.2,270.4 305.4,278.4 305.5,280.3 305.7,278.6 305.8,272.3 306.0,283.5 306.2,275.4 306.3,281.4 306.5,295.1 306.6,271.6 306.8,272.0 306.9,274.1 307.1,275.1 307.3,280.7 307.4,296.3 307.6,273.0 307.7,268.3 307.9,279.1 308.0,298.5 308.2,270.2 308.4,280.8 308.5,270.1 308.7,281.3 308.8,270.4 309.0,277.6 309.1,270.4 309.3,276.9 309.5,276.9 309.6,279.4 309.8,274.0 309.9,270.5 310.1,269.0 310.2,275.0 310.4,281.6 310.6,273.8 310.7,272.4 310.9,275.7 311.0,284.6 311.2,275.7 311.3,288.8 311.5,269.9 311.7,276.0 311.8,272.7 312.0,276.0 312.1,275.7 312.3,270.4 312.4,281.4 312.6,275.7 312.7,277.2 312.9,284.8 313.1,275.4 313.2,268.8 313.4,266.8 313.5,273.2 313.7,286.5 313.8,273.4 314.0,273.9 314.2,275.1 314.3,278.1 314.5,278.6 314.6,272.4 314.8,284.8 314.9,276.8 315.1,276.0 315.3,273.9 315.4,283.3 315.6,269.2 315.7,283.3 315.9,279.0 316.0,274.4 316.2,275.0 316.4,279.6 316.5,283.3 316.7,273.6 316.8,276.2 317.0,275.7 317.1,274.1 317.3,271.4 317.5,265.6 317.6,283.8 317.8,276.4 317.9,267.4 318.1,271.1 318.2,271.1 318.4,279.3 318.6,293.3 318.7,279.9 318.9,272.0 319.0,269.2 319.2,269.5 319.3,268.6 319.5,281.2 319.7,277.2 319.8,272.4 320.0,282.8 320.1,271.6 320.3,271.8 320.4,273.4 320.6,274.1 320.7,283.3 320.9,272.4 321.1,280.4 321.2,270.1 321.4,291.6 321.5,270.7 321.7,274.0 321.8,272.3 322.0,282.0 322.2,274.2 322.3,270.5 322.5,293.7 322.6,281.7 322.8,269.5 322.9,289.0 323.1,270.4 323.3,276.3 323.4,281.5 323.6,276.3 323.7,273.2 323.9,277.4 324.0,269.0 324.2,288.0 324.4,276.8 324.5,273.7 324.7,290.8 324.8,289.7 325.0,265.9 325.1,281.9 325.3,278.5 325.5,274.7 325.6,273.8 325.8,267.4 325.9,289.2 326.1,271.1 326.2,271.0 326.4,272.9 326.6,278.3 326.7,269.4 326.9,272.3 327.0,271.2 327.2,274.6 327.3,277.0 327.5,276.1 327.7,277.2 327.8,265.7 328.0,276.7 328.1,279.3 328.3,299.5 328.4,275.4 328.6,273.8 328.8,281.1 328.9,277.9 329.1,271.7 329.2,268.0 329.4,268.4 329.5,284.9 329.7,273.6 329.8,276.9 330.0,275.7 330.2,285.8 330.3,268.9 330.5,287.7 330.6,278.5 330.8,279.7 330.9,280.1 331.1,269.5 331.3,280.2 331.4,267.1 331.6,285.0 331.7,269.3 331.9,282.2 332.0,274.1 332.2,272.8 332.4,279.8 332.5,271.3 332.7,276.0 332.8,277.2 333.0,275.9 333.1,272.9 333.3,274.7 333.5,278.7 333.6,293.6 333.8,273.8 333.9,286.7 334.1,271.6 334.2,284.1 334.4,281.9 334.6,284.3 334.7,275.7 334.9,273.4 335.0,272.5 335.2,277.3 335.3,278.7 335.5,271.1 335.7,277.7 335.8,266.4 336.0,278.3 336.1,267.8 336.3,295.6 336.4,272.5 336.6,276.7 336.8,279.4 336.9,292.9 337.1,286.3 337.2,273.9 337.4,267.8 337.5,281.7 337.7,271.4 337.8,297.4 338.0,279.0 338.2,274.6 338.3,277.0 338.5,275.2 338.6,268.7 338.8,271.5 338.9,272.6 339.1,269.5 339.3,273.7 339.4,268.3 339.6,272.9 339.7,278.8 339.9,275.5 340.0,280.0 340.2,272.7 340.4,264.9 340.5,273.6 340.7,269.5 340.8,278.5 341.0,270.1 341.1,277.2 341.3,268.9 341.5,272.1 341.6,275.2 341.8,269.1 341.9,269.1 342.1,270.8 342.2,280.5 342.4,264.7 342.6,290.7 342.7,284.2 342.9,281.5 343.0,283.8 343.2,272.1 343.3,277.0 343.5,271.7 343.7,266.2 343.8,279.2 344.0,272.0 344.1,274.5 344.3,275.5 344.4,291.7 344.6,277.4 344.8,282.7 344.9,282.1 345.1,280.6 345.2,281.6 345.4,274.5 345.5,276.8 345.7,268.3 345.8,279.6 346.0,269.1 346.2,278.3 346.3,278.5 346.5,287.9 346.6,275.9 346.8,291.7 346.9,272.5 347.1,273.8 347.3,266.0 347.4,271.6 347.6,277.4 347.7,266.5 347.9,276.2 348.0,281.8 348.2,298.1 348.4,268.1 348.5,273.0 348.7,279.0 348.8,282.9 349.0,270.7 349.1,287.2 349.3,277.3 349.5,273.8 349.6,282.4 349.8,269.6 349.9,273.2 350.1,279.1 350.2,271.2 350.4,271.6 350.6,274.1 350.7,272.1 350.9,272.7 351.0,279.4 351.2,278.4 351.3,274.9 351.5,274.2 351.7,279.4 351.8,268.0 352.0,274.1 352.1,270.2 352.3,280.8 352.4,275.0 352.6,270.0 352.8,269.3 352.9,276.2 353.1,270.1 353.2,281.3 353.4,283.4 353.5,270.3 353.7,275.1 353.9,276.0 354.0,271.8 354.2,274.8 354.3,271.0 354.5,272.0 354.6,274.2 354.8,276.4 354.9,285.6 355.1,273.5 355.3,280.5 355.4,278.2 355.6,278.9 355.7,284.0 355.9,269.4 356.0,275.6 356.2,272.8 356.4,287.7 356.5,276.4 356.7,277.7 356.8,272.4 357.0,276.7 357.1,273.4 357.3,280.1 357.5,271.6 357.6,272.2 357.8,285.3 357.9,276.2 358.1,274.5 358.2,285.0 358.4,274.9 358.6,269.7 358.7,274.8 358.9,275.3 359.0,274.2 359.2,272.1 359.3,275.9 359.5,272.0 359.7,270.8 359.8,282.7 360.0,284.8 360.1,283.4 360.3,271.0 360.4,286.5 360.6,271.6 360.8,286.5 360.9,275.6 361.1,263.7 361.2,269.1 361.4,277.0 361.5,297.3 361.7,278.1 361.9,277.3 362.0,269.3 362.2,274.2 362.3,286.9 362.5,269.2 362.6,269.4 362.8,279.8 362.9,273.9 363.1,274.9 363.3,273.2 363.4,270.3 363.6,268.1 363.7,286.9 363.9,273.9 364.0,273.5 364.2,278.1 364.4,277.7 364.5,270.2 364.7,275.0 364.8,275.1 365.0,286.2 365.1,272.5 365.3,269.3 365.5,273.0 365.6,268.0 365.8,270.3 365.9,272.0 366.1,277.7 366.2,269.7 366.4,268.1 366.6,283.4 366.7,270.5 366.9,275.6 367.0,278.4 367.2,271.8 367.3,286.3 367.5,287.8 367.7,277.7 367.8,273.2 368.0,273.5 368.1,268.2 368.3,269.6 368.4,270.2 368.6,275.9 368.8,276.1 368.9,279.2 369.1,283.8 369.2,271.3 369.4,271.9 369.5,269.8 369.7,268.0 369.9,267.5 370.0,277.7 370.2,270.9 370.3,267.8 370.5,274.5 370.6,273.0 370.8,284.0 370.9,278.1 371.1,269.5 371.3,267.9 371.4,273.0 371.6,276.7 371.7,272.2 371.9,276.9 372.0,278.6 372.2,280.4 372.4,277.5 372.5,273.5 372.7,273.6 372.8,273.0 373.0,288.8 373.1,283.5 373.3,282.0 373.5,276.5 373.6,272.1 373.8,280.6 373.9,276.9 374.1,269.0 374.2,281.3 374.4,268.9 374.6,274.3 374.7,282.5 374.9,280.8 375.0,274.2 375.2,279.8 375.3,279.6 375.5,278.7 375.7,274.2 375.8,292.7 376.0,274.4 376.1,273.3 376.3,279.0 376.4,281.1 376.6,289.2 376.8,274.0 376.9,268.6 377.1,273.2 377.2,272.9 377.4,271.4 377.5,278.6 377.7,265.7 377.9,272.6 378.0,269.9 378.2,270.0 378.3,286.0 378.5,275.5 378.6,284.0 378.8,271.1 379.0,281.2 379.1,281.6 379.3,279.2 379.4,266.1 379.6,270.3 379.7,274.2 379.9,268.2 380.0,272.4 380.2,272.5 380.4,270.3 380.5,271.3 380.7,280.8 380.8,271.9 381.0,281.8 381.1,267.5 381.3,270.9 381.5,270.1 381.6,275.1 381.8,270.3 381.9,277.4 382.1,273.8 382.2,282.6 382.4,270.3 382.6,269.5 382.7,279.7 382.9,278.7 383.0,268.2 383.2,271.4 383.3,270.3 383.5,271.7 383.7,269.7 383.8,284.0 384.0,269.5 384.1,272.9 384.3,283.0 384.4,292.3 384.6,269.9 384.8,272.8 384.9,276.7 385.1,276.4 385.2,272.6 385.4,283.9 385.5,271.5 385.7,272.0 385.9,282.3 386.0,287.7 386.2,280.1 386.3,266.8 386.5,279.0 386.6,272.7 386.8,275.7 387.0,266.9 387.1,265.1 387.3,269.6 387.4,282.9 387.6,267.2 387.7,269.9 387.9,276.4 388.0,273.4 388.2,273.9 388.4,267.7 388.5,271.9 388.7,272.5 388.8,266.8 389.0,272.0 389.1,276.0 389.3,271.8 389.5,274.1 389.6,266.0 389.8,269.5 389.9,273.3 390.1,270.7 390.2,271.0 390.4,288.5 390.6,281.6 390.7,268.5 390.9,272.9 391.0,287.1 391.2,270.8 391.3,277.7 391.5,277.5 391.7,275.3 391.8,272.1 392.0,271.7 392.1,266.5 392.3,271.5 392.4,280.7 392.6,269.6 392.8,276.4 392.9,273.9 393.1,280.7 393.2,280.4 393.4,286.4 393.5,275.8 393.7,266.6 393.9,277.1 394.0,279.6 394.2,275.0 394.3,278.1 394.5,275.8 394.6,278.0 394.8,268.1 395.0,269.4 395.1,270.3 395.3,281.0 395.4,274.5 395.6,271.8 395.7,277.8 395.9,267.9 396.0,277.5 396.2,278.1 396.4,287.6 396.5,273.1 396.7,267.3 396.8,278.5 397.0,273.4 397.1,271.7 397.3,269.9 397.5,277.1 397.6,266.3 397.8,271.5 397.9,275.6 398.1,270.8 398.2,275.6 398.4,276.3 398.6,268.8 398.7,273.7 398.9,268.2 399.0,276.5 399.2,275.3 399.3,269.1 399.5,273.0 399.7,273.0 399.8,269.2 400.0,269.3 400.1,271.7 400.3,274.0 400.4,268.2 400.6,269.6 400.8,268.6 400.9,271.3 401.1,272.5 401.2,285.1 401.4,269.6 401.5,279.1 401.7,283.4 401.9,265.9 402.0,276.1 402.2,284.8 402.3,291.2 402.5,281.4 402.6,285.8 402.8,273.2 403.0,287.8 403.1,282.6 403.3,272.3 403.4,276.6 403.6,279.0 403.7,279.2 403.9,269.8 404.0,289.0 404.2,289.4 404.4,275.1 404.5,272.2 404.7,272.8 404.8,273.8 405.0,278.8 405.1,264.0 405.3,266.5 405.5,265.2 405.6,274.3 405.8,274.6 405.9,271.2 406.1,276.4 406.2,275.4 406.4,279.6 406.6,273.7 406.7,279.5 406.9,279.5 407.0,273.1 407.2,266.0 407.3,266.9 407.5,271.0 407.7,285.4 407.8,293.2 408.0,271.0 408.1,277.9 408.3,280.5 408.4,264.6 408.6,287.2 408.8,276.2 408.9,269.8 409.1,282.9 409.2,280.8 409.4,274.3 409.5,267.9 409.7,274.3 409.9,281.8 410.0,273.1 410.2,279.2 410.3,290.8 410.5,271.1 410.6,265.5 410.8,270.8 411.0,269.7 411.1,291.1 411.3,272.8 411.4,294.9 411.6,270.0 411.7,287.2 411.9,273.4 412.1,276.7 412.2,268.4 412.4,272.0 412.5,278.3 412.7,275.7 412.8,272.7 413.0,279.4 413.1,272.7 413.3,271.1 413.5,285.0 413.6,286.1 413.8,275.4 413.9,271.0 414.1,271.9 414.2,274.3 414.4,267.9 414.6,285.4 414.7,265.0 414.9,275.5 415.0,269.4 415.2,270.6 415.3,283.3 415.5,269.8 415.7,286.6 415.8,267.3 416.0,271.6 416.1,272.0 416.3,277.8 416.4,291.4 416.6,282.8 416.8,271.1 416.9,269.7 417.1,273.7 417.2,270.0 417.4,284.7 417.5,273.1 417.7,273.8 417.9,272.6 418.0,284.3 418.2,273.2 418.3,291.2 418.5,290.1 418.6,269.6 418.8,281.9 419.0,279.1 419.1,282.5 419.3,273.2 419.4,283.3 419.6,269.0 419.7,282.9 419.9,277.0 420.1,280.9 420.2,265.5 420.4,296.1 420.5,282.3 420.7,272.5 420.8,274.5 421.0,272.3 421.1,267.6 421.3,269.8 421.5,269.2 421.6,288.8 421.8,268.9 421.9,268.4 422.1,267.0 422.2,271.1 422.4,277.0 422.6,276.6 422.7,274.6 422.9,271.8 423.0,270.3 423.2,264.1 423.3,277.6 423.5,284.9 423.7,268.3 423.8,276.5 424.0,270.2 424.1,269.9 424.3,282.9 424.4,277.0 424.6,275.1 424.8,274.0 424.9,270.8 425.1,277.7 425.2,274.6 425.4,274.1 425.5,275.2 425.7,272.7 425.9,277.0 426.0,274.1 426.2,276.5 426.3,274.8 426.5,284.0 426.6,282.9 426.8,283.2 427.0,280.0 427.1,293.2 427.3,287.5 427.4,285.7 427.6,284.2 427.7,293.0 427.9,292.0 428.1,291.8 428.2,293.1 428.4,293.9 428.5,294.9 428.7,299.3 428.8,299.8 429.0,305.6 429.1,297.2 429.3,300.8 429.5,299.8 429.6,293.7 429.8,295.6 429.9,294.9 430.1,293.3 430.2,292.3 430.4,290.3 430.6,291.5 430.7,293.9 430.9,292.3 431.0,294.4 431.2,285.2 431.3,286.3 431.5,285.6 431.7,280.5 431.8,275.7 432.0,277.3 432.1,279.4 432.3,275.2 432.4,279.2 432.6,280.2 432.8,276.9 432.9,275.7 433.1,273.6 433.2,274.9 433.4,272.9 433.5,278.7 433.7,271.0 433.9,276.4 434.0,288.9 434.2,278.7 434.3,269.7 434.5,286.7 434.6,267.9 434.8,271.7 435.0,271.6 435.1,281.0 435.3,265.2 435.4,271.7 435.6,278.6 435.7,292.3 435.9,281.5 436.1,275.8 436.2,281.2 436.4,278.0 436.5,273.4 436.7,278.0 436.8,277.3 437.0,270.2 437.2,279.4 437.3,275.5 437.5,271.9 437.6,268.5 437.8,271.6 437.9,290.5 438.1,282.1 438.2,270.9 438.4,282.0 438.6,280.0 438.7,274.6 438.9,284.8 439.0,274.2 439.2,273.0 439.3,278.7 439.5,272.9 439.7,266.2 439.8,282.4 440.0,273.4 440.1,280.1 440.3,278.9 440.4,277.7 440.6,274.3 440.8,284.4 440.9,276.6 441.1,271.6 441.2,281.9 441.4,274.0 441.5,293.8 441.7,286.1 441.9,270.5 442.0,278.4 442.2,272.3 442.3,280.9 442.5,266.8 442.6,268.7 442.8,267.9 443.0,278.5 443.1,267.9 443.3,278.8 443.4,274.6 443.6,279.5 443.7,272.6 443.9,275.2 444.1,293.1 444.2,278.4 444.4,273.6 444.5,273.9 444.7,272.1 444.8,269.1 445.0,262.0 445.2,278.6 445.3,276.6 445.5,276.2 445.6,290.2 445.8,280.4 445.9,314.4 446.1,277.8 446.2,272.9 446.4,281.2 446.6,281.9 446.7,280.8 446.9,273.4 447.0,268.2 447.2,278.4 447.3,272.6 447.5,275.1 447.7,271.6 447.8,266.4 448.0,266.9 448.1,286.2 448.3,293.1 448.4,277.2 448.6,268.5 448.8,273.3 448.9,269.6 449.1,273.6 449.2,278.1 449.4,272.6 449.5,268.0 449.7,279.4 449.9,268.0 450.0,279.8 450.2,277.9 450.3,275.8 450.5,271.4 450.6,270.5 450.8,274.2 451.0,282.3 451.1,271.4 451.3,271.8 451.4,266.4 451.6,278.4 451.7,266.4 451.9,275.1 452.1,267.9 452.2,270.6 452.4,271.6 452.5,281.6 452.7,278.8 452.8,288.0 453.0,275.1 453.2,284.1 453.3,266.9 453.5,276.0 453.6,274.7 453.8,289.0 453.9,280.4 454.1,266.2 454.2,269.1 454.4,271.9 454.6,266.1 454.7,270.2 454.9,277.9 455.0,272.4 455.2,268.4 455.3,292.6 455.5,270.7 455.7,293.7 455.8,280.9 456.0,277.7 456.1,273.2 456.3,267.1 456.4,280.8 456.6,273.4 456.8,275.0 456.9,277.8 457.1,283.8 457.2,283.3 457.4,271.1 457.5,269.8 457.7,276.2 457.9,279.6 458.0,272.9 458.2,280.6 458.3,275.5 458.5,278.5 458.6,269.6 458.8,272.6 459.0,271.0 459.1,269.8 459.3,283.2 459.4,272.9 459.6,279.4 459.7,282.5 459.9,278.2 460.1,274.9 460.2,270.7 460.4,270.7 460.5,277.1 460.7,271.2 460.8,267.9 461.0,276.8 461.2,277.8 461.3,278.6 461.5,269.3 461.6,266.4 461.8,276.8 461.9,270.8 462.1,272.3 462.3,286.4 462.4,280.7 462.6,268.4 462.7,279.3 462.9,273.7 463.0,275.8 463.2,273.3 463.3,282.6 463.5,275.4 463.7,277.9 463.8,278.7 464.0,274.1 464.1,270.1 464.3,274.5 464.4,267.1 464.6,282.6 464.8,271.9 464.9,287.8 465.1,267.7 465.2,274.2 465.4,277.0 465.5,270.4 465.7,274.7 465.9,275.3 466.0,266.2 466.2,277.2 466.3,281.3 466.5,284.6 466.6,273.3 466.8,280.1 467.0,270.2 467.1,276.3 467.3,278.2 467.4,282.1 467.6,270.5 467.7,267.8 467.9,266.4 468.1,277.2 468.2,270.9 468.4,281.5 468.5,266.4 468.7,269.5 468.8,278.1 469.0,274.2 469.2,280.8 469.3,276.6 469.5,270.5 469.6,279.6 469.8,269.3 469.9,288.7 470.1,272.3 470.3,266.6 470.4,268.9 470.6,277.7 470.7,275.6 470.9,275.6 471.0,278.5 471.2,275.1 471.3,268.2 471.5,278.1 471.7,269.6 471.8,270.7 472.0,269.5 472.1,271.7 472.3,269.0 472.4,273.2 472.6,269.4 472.8,269.0 472.9,268.4 473.1,267.0 473.2,271.4 473.4,286.6 473.5,273.1 473.7,276.2 473.9,269.9 474.0,278.9 474.2,278.0 474.3,292.8 474.5,278.5 474.6,284.8 474.8,279.3 475.0,275.2 475.1,266.5 475.3,272.0 475.4,274.2 475.6,270.6 475.7,268.5 475.9,282.6 476.1,269.2 476.2,274.0 476.4,268.3 476.5,279.0 476.7,275.8 476.8,271.1 477.0,267.6 477.2,272.5 477.3,270.8 477.5,283.3 477.6,269.4 477.8,275.9 477.9,270.5 478.1,278.7 478.3,264.3 478.4,275.5 478.6,267.2 478.7,276.9 478.9,270.6 479.0,273.1 479.2,271.5 479.4,266.4 479.5,272.9 479.7,279.7 479.8,273.0 480.0,268.6 480.1,267.4 480.3,290.1 480.4,268.0 480.6,266.5 480.8,267.2 480.9,281.0 481.1,269.6 481.2,272.4 481.4,277.4 481.5,273.6 481.7,294.3 481.9,270.8 482.0,278.3 482.2,273.5 482.3,272.4 482.5,279.2 482.6,270.8 482.8,270.9 483.0,277.5 483.1,267.4 483.3,266.8 483.4,283.6 483.6,269.7 483.7,281.1 483.9,271.9 484.1,276.3 484.2,278.1 484.4,280.4 484.5,272.2 484.7,280.4 484.8,283.7 485.0,276.7 485.2,279.7 485.3,274.6 485.5,273.9 485.6,274.2 485.8,272.5 485.9,280.1 486.1,271.1 486.3,275.2 486.4,274.8 486.6,271.2 486.7,280.7 486.9,289.8 487.0,270.7 487.2,272.0 487.4,275.2 487.5,277.0 487.7,271.6 487.8,266.7 488.0,275.8 488.1,269.8 488.3,271.4 488.4,266.8 488.6,275.2 488.8,282.1 488.9,280.5 489.1,274.0 489.2,275.8 489.4,276.1 489.5,267.3 489.7,274.1 489.9,275.4 490.0,269.9 490.2,275.7 490.3,275.8 490.5,273.2 490.6,276.4 490.8,280.4 491.0,290.5 491.1,285.5 491.3,280.9 491.4,285.7 491.6,270.6 491.7,267.7 491.9,273.1 492.1,283.4 492.2,274.7 492.4,270.4 492.5,275.5 492.7,268.5 492.8,272.4 493.0,287.7 493.2,297.1 493.3,272.0 493.5,280.4 493.6,272.3 493.8,265.9 493.9,265.4 494.1,275.4 494.3,278.4 494.4,263.9 494.6,280.0 494.7,280.7 494.9,270.6 495.0,273.3 495.2,288.3 495.4,269.8 495.5,274.4 495.7,272.4 495.8,275.3 496.0,268.7 496.1,272.9 496.3,280.0 496.4,287.7 496.6,269.9 496.8,297.1 496.9,275.0 497.1,272.8 497.2,275.1 497.4,266.5 497.5,272.2 497.7,275.6 497.9,267.9 498.0,269.8 498.2,264.5 498.3,276.6 498.5,277.7 498.6,280.5 498.8,273.9 499.0,267.4 499.1,267.2 499.3,280.8 499.4,272.8 499.6,272.6 499.7,267.2 499.9,270.0 500.1,277.4 500.2,268.5 500.4,270.7 500.5,270.7 500.7,283.0 500.8,270.8 501.0,271.7 501.2,275.7 501.3,266.9 501.5,274.8 501.6,269.5 501.8,274.4 501.9,275.2 502.1,274.1 502.3,270.4 502.4,271.3 502.6,264.8 502.7,270.5 502.9,271.9 503.0,278.0 503.2,288.4 503.4,283.6 503.5,268.1 503.7,274.3 503.8,270.8 504.0,276.2 504.1,279.6 504.3,269.4 504.5,279.6 504.6,276.3 504.8,267.2 504.9,269.9 505.1,267.7 505.2,267.8 505.4,265.9 505.5,272.0 505.7,268.8 505.9,283.0 506.0,269.6 506.2,270.5 506.3,274.3 506.5,266.2 506.6,280.4 506.8,273.0 507.0,280.2 507.1,274.2 507.3,277.6 507.4,273.0 507.6,272.5 507.7,268.2 507.9,266.3 508.1,281.1 508.2,266.0 508.4,273.1 508.5,289.1 508.7,281.8 508.8,272.0 509.0,266.7 509.2,275.8 509.3,272.0 509.5,268.7 509.6,275.9 509.8,277.0 509.9,278.1 510.1,298.6 510.3,279.1 510.4,282.0 510.6,271.5 510.7,267.3 510.9,271.4 511.0,302.6 511.2,274.8 511.4,276.7 511.5,294.8 511.7,267.9 511.8,278.7 512.0,279.8 512.1,282.8 512.3,277.6 512.5,273.5 512.6,266.1 512.8,271.1 512.9,269.2 513.1,282.4 513.2,277.6 513.4,275.8 513.5,266.5 513.7,264.1 513.9,271.7 514.0,270.7 514.2,275.9 514.3,277.9 514.5,280.5 514.6,272.6 514.8,280.4 515.0,272.7 515.1,275.0 515.3,292.2 515.4,274.9 515.6,270.3 515.7,269.3 515.9,283.3 516.1,275.4 516.2,270.2 516.4,271.5 516.5,274.4 516.7,267.4 516.8,279.8 517.0,283.9 517.2,283.5 517.3,274.9 517.5,273.6 517.6,278.1 517.8,276.9 517.9,267.7 518.1,274.8 518.3,286.8 518.4,268.9 518.6,280.5 518.7,285.6 518.9,276.3 519.0,270.5 519.2,273.6 519.4,271.5 519.5,271.6 519.7,277.5 519.8,275.3 520.0,283.5 520.1,264.1 520.3,277.7 520.5,278.7 520.6,271.2 520.8,280.6 520.9,273.2 521.1,267.5 521.2,273.7 521.4,279.4 521.5,273.8 521.7,277.1 521.9,269.4 522.0,281.1 522.2,281.6 522.3,271.1 522.5,265.6 522.6,270.9 522.8,282.2 523.0,286.0 523.1,270.8 523.3,271.1 523.4,270.9 523.6,265.5 523.7,299.2 523.9,270.7 524.1,271.9 524.2,268.5 524.4,282.1 524.5,279.0 524.7,276.0 524.8,263.6 525.0,267.7 525.2,268.6 525.3,265.9 525.5,266.7 525.6,279.3 525.8,274.0 525.9,275.7 526.1,272.6 526.3,277.4 526.4,273.7 526.6,271.6 526.7,273.3 526.9,270.1 527.0,270.0 527.2,278.0 527.4,273.6 527.5,277.2 527.7,271.0 527.8,274.0 528.0,278.9 528.1,275.9 528.3,275.9 528.5,270.6 528.6,278.4 528.8,271.7 528.9,271.9 529.1,277.5 529.2,275.9 529.4,266.2 529.5,271.5 529.7,269.6 529.9,276.3 530.0,269.7 530.2,273.9 530.3,277.6 530.5,270.9 530.6,268.9 530.8,274.6 531.0,276.7 531.1,279.7 531.3,277.3 531.4,268.8 531.6,268.8 531.7,274.8 531.9,270.1 532.1,282.0 532.2,274.6 532.4,272.5 532.5,290.8 532.7,287.0 532.8,270.2 533.0,271.3 533.2,294.5 533.3,272.3 533.5,279.2 533.6,267.7 533.8,272.6 533.9,276.6 534.1,276.5 534.3,272.4 534.4,281.8 534.6,276.7 534.7,275.8 534.9,282.1 535.0,278.2 535.2,278.2 535.4,275.6 535.5,269.7 535.7,277.6 535.8,274.0 536.0,285.9 536.1,278.5 536.3,270.0 536.5,273.1 536.6,269.7 536.8,277.8 536.9,274.6 537.1,283.4 537.2,287.0 537.4,283.4 537.6,274.7 537.7,277.2 537.9,273.5 538.0,280.1 538.2,273.8 538.3,268.7 538.5,268.4 538.6,276.3 538.8,272.9 539.0,283.7 539.1,275.7 539.3,271.7 539.4,276.5 539.6,269.0 539.7,275.0 539.9,275.9 540.1,280.4 540.2,271.5 540.4,275.1 540.5,269.8 540.7,269.2 540.8,280.2 541.0,266.3 541.2,271.4 541.3,274.1 541.5,280.0 541.6,271.2 541.8,271.8 541.9,272.2 542.1,273.6 542.3,273.1 542.4,274.0 542.6,281.3 542.7,271.4 542.9,272.2 543.0,272.8 543.2,274.6 543.4,272.8 543.5,275.8 543.7,265.9 543.8,271.7 544.0,272.2 544.1,267.1 544.3,270.7 544.5,268.9 544.6,269.2 544.8,292.0 544.9,274.6 545.1,271.2 545.2,268.7 545.4,268.0 545.6,289.6 545.7,285.0 545.9,272.1 546.0,280.4 546.2,277.4 546.3,267.8 546.5,264.6 546.6,269.7 546.8,267.3 547.0,270.6 547.1,283.3 547.3,273.0 547.4,268.7 547.6,271.1 547.7,269.9 547.9,279.3 548.1,277.3 548.2,269.2 548.4,271.1 548.5,278.6 548.7,266.5 548.8,273.6 549.0,289.5 549.2,270.5 549.3,275.9 549.5,276.1 549.6,271.6 549.8,273.4 549.9,267.5 550.1,273.7 550.3,279.3 550.4,276.0 550.6,283.2 550.7,271.9 550.9,275.6 551.0,278.8 551.2,302.3 551.4,277.9 551.5,273.0 551.7,272.1 551.8,270.0 552.0,268.7 552.1,271.4 552.3,274.7 552.5,266.6 552.6,282.8 552.8,273.6 552.9,278.7 553.1,275.4 553.2,279.7 553.4,279.5 553.6,273.2 553.7,273.7 553.9,291.8 554.0,279.3 554.2,270.2 554.3,273.2 554.5,270.0 554.6,270.7 554.8,272.8 555.0,275.7 555.1,285.1 555.3,271.2 555.4,273.1 555.6,282.8 555.7,268.5 555.9,278.1 556.1,278.0 556.2,273.9 556.4,277.0 556.5,275.7 556.7,270.8 556.8,289.6 557.0,282.5 557.2,270.0 557.3,279.0 557.5,270.3 557.6,267.3 557.8,276.8 557.9,266.8 558.1,274.7 558.3,270.2 558.4,274.1 558.6,275.2 558.7,275.2 558.9,273.0 559.0,272.8 559.2,273.0 559.4,284.1 559.5,268.4 559.7,292.9 559.8,272.0 560.0,274.2 560.1,277.0 560.3,270.8 560.5,271.9 560.6,283.9 560.8,276.6 560.9,276.4 561.1,271.6 561.2,269.9 561.4,273.2 561.6,282.2 561.7,284.9 561.9,289.8 562.0,275.8 562.2,275.4 562.3,275.1 562.5,273.6 562.7,266.1 562.8,274.8 563.0,266.1 563.1,271.9 563.3,275.5 563.4,277.5 563.6,287.3 563.7,268.6 563.9,274.8 564.1,277.6 564.2,273.7 564.4,267.2 564.5,278.5 564.7,275.2 564.8,274.7 565.0,277.1 565.2,271.1 565.3,267.6 565.5,277.2 565.6,291.3 565.8,281.9 565.9,292.3 566.1,278.9 566.3,283.6 566.4,273.8 566.6,269.6 566.7,278.3 566.9,269.4 567.0,270.8 567.2,267.2 567.4,272.8 567.5,283.2 567.7,271.5 567.8,271.2 568.0,274.2 568.1,275.1 568.3,273.0 568.5,277.9 568.6,284.1 568.8,274.3 568.9,282.6 569.1,274.2 569.2,276.2 569.4,268.6 569.6,265.8 569.7,265.1 569.9,278.4 570.0,272.8 570.2,263.9 570.3,270.2 570.5,284.7 570.7,280.6 570.8,272.9 571.0,275.0 571.1,283.8 571.3,283.4 571.4,272.5 571.6,287.9 571.7,267.2 571.9,275.7 572.1,272.0 572.2,272.7 572.4,273.8 572.5,280.6 572.7,267.2 572.8,265.4 573.0,270.2 573.2,271.7 573.3,268.2 573.5,269.6 573.6,271.1 573.8,278.1 573.9,271.1 574.1,270.4 574.3,281.6 574.4,274.3 574.6,277.8 574.7,282.2 574.9,280.3 575.0,278.1 575.2,278.7 575.4,289.3 575.5,294.6 575.7,295.9 575.8,280.5 576.0,292.0 576.1,273.1 576.3,275.9 576.5,279.6 576.6,278.1 576.8,270.7 576.9,286.9 577.1,272.2 577.2,275.8 577.4,283.5 577.6,280.6 577.7,282.5 577.9,275.9 578.0,275.3 578.2,270.8 578.3,276.3 578.5,270.9 578.7,286.5 578.8,274.8 579.0,275.8 579.1,271.2 579.3,278.8 579.4,274.6 579.6,286.9 579.8,291.2 579.9,292.9 580.1,302.5 580.2,295.3 580.4,288.8 580.5,296.0 580.7,293.7 580.8,288.1 581.0,305.1 581.2,311.6 581.3,296.7 581.5,296.7 581.6,292.2 581.8,299.8 581.9,295.8 582.1,294.0 582.3,298.3 582.4,286.7 582.6,298.2 582.7,304.4 582.9,297.0 583.0,293.6 583.2,291.9 583.4,295.1 583.5,297.7 583.7,294.7 583.8,295.7 584.0,296.4 584.1,304.3 584.3,292.7 584.5,303.8 584.6,291.8 584.8,293.4 584.9,291.8 585.1,299.8 585.2,292.7 585.4,300.4 585.6,298.2 585.7,293.6 585.9,299.0 586.0,291.2 586.2,291.5 586.3,288.7 586.5,297.4 586.7,294.3 586.8,295.5 587.0,295.5 587.1,294.7 587.3,313.3 587.4,292.6 587.6,293.8 587.8,295.5 587.9,301.1 588.1,301.4 588.2,297.0 588.4,299.7 588.5,291.3 588.7,291.4 588.8,297.3 589.0,299.5 589.2,302.8 589.3,294.5 589.5,312.3 589.6,297.8 589.8,303.2 589.9,299.0 590.1,292.4 590.3,300.0 590.4,304.2 590.6,295.7 590.7,304.7 590.9,297.9 591.0,294.4 591.2,302.2 591.4,294.6 591.5,324.3 591.7,294.4 591.8,295.2 592.0,296.7 592.1,291.1 592.3,294.5 592.5,300.8 592.6,296.3 592.8,297.7 592.9,301.9 593.1,304.7 593.2,293.9 593.4,296.4 593.6,305.2 593.7,295.7 593.9,306.1 594.0,295.7 594.2,295.2 594.3,305.9 594.5,294.4 594.7,307.4 594.8,306.6 595.0,307.0 595.1,297.2 595.3,300.0 595.4,311.0 595.6,302.6 595.8,296.8 595.9,298.8 596.1,305.4 596.2,301.8 596.4,296.7 596.5,301.4 596.7,295.2 596.8,299.5 597.0,294.3 597.2,299.9 597.3,295.4 597.5,302.6 597.6,299.4 597.8,304.9 597.9,292.3 598.1,301.0 598.3,295.2 598.4,305.9 598.6,297.1 598.7,298.0 598.9,299.6 599.0,300.4 599.2,295.1 599.4,294.8 599.5,293.9 599.7,295.0 599.8,295.8 600.0,292.8 600.1,296.2 600.3,301.5 600.5,304.0 600.6,300.4 600.8,304.4 600.9,297.8 601.1,293.8 601.2,301.7 601.4,299.4 601.6,294.9 601.7,301.9 601.9,308.8 602.0,299.5 602.2,293.9 602.3,302.2 602.5,305.3 602.7,299.5 602.8,301.3 603.0,302.8 603.1,301.2 603.3,300.0 603.4,309.9 603.6,302.5 603.8,296.5 603.9,297.9 604.1,300.4 604.2,310.9 604.4,299.1 604.5,302.2 604.7,297.6 604.9,309.3 605.0,299.4 605.2,310.9 605.3,311.9 605.5,299.8 605.6,301.6 605.8,305.5 605.9,297.9 606.1,299.0 606.3,298.1 606.4,299.7 606.6,300.6 606.7,295.3 606.9,301.0 607.0,308.1 607.2,304.8 607.4,315.7 607.5,297.5 607.7,299.3 607.8,304.9 608.0,303.9 608.1,303.2 608.3,300.8 608.5,295.1 608.6,312.4 608.8,312.8 608.9,302.9 609.1,303.8 609.2,298.9 609.4,299.2 609.6,312.1 609.7,305.5 609.9,327.1 610.0,300.2 610.2,300.5 610.3,299.6 610.5,305.8 610.7,301.0 610.8,306.0 611.0,303.8 611.1,303.7 611.3,301.3 611.4,299.8 611.6,299.7 611.8,308.9 611.9,302.0 612.1,298.2 612.2,304.8 612.4,300.4 612.5,305.3 612.7,297.0 612.9,304.2 613.0,306.3 613.2,298.2 613.3,299.1 613.5,316.1 613.6,305.2 613.8,308.4 613.9,308.4 614.1,305.6 614.3,303.1 614.4,302.3 614.6,300.5 614.7,298.2 614.9,302.1 615.0,304.6 615.2,298.8 615.4,309.3 615.5,298.8 615.7,300.9 615.8,302.5 616.0,304.5 616.1,301.3 616.3,301.7 616.5,296.9 616.6,300.9 616.8,305.6 616.9,308.0 617.1,307.4 617.2,309.6 617.4,299.5 617.6,306.6 617.7,303.4 617.9,304.9 618.0,298.0 618.2,297.8 618.3,307.0 618.5,298.4 618.7,299.8 618.8,300.9 619.0,309.7 619.1,309.6 619.3,301.2 619.4,301.6 619.6,301.0 619.8,298.8 619.9,300.5 620.1,300.5 620.2,303.0 620.4,303.6 620.5,300.0 620.7,304.3 620.9,298.7 621.0,310.6 621.2,301.5 621.3,316.3 621.5,304.3 621.6,300.7 621.8,314.3 621.9,306.4 622.1,308.9 622.3,301.5 622.4,308.7 622.6,302.3 622.7,309.2 622.9,311.0 623.0,312.1 623.2,310.0 623.4,300.7 623.5,313.2 623.7,304.0 623.8,308.9 624.0,301.2 624.1,300.4 624.3,306.7 624.5,304.5 624.6,303.4 624.8,304.0 624.9,297.9 625.1,316.5 625.2,306.2 625.4,305.0 625.6,299.9 625.7,300.6 625.9,302.2 626.0,306.5 626.2,307.9 626.3,303.5 626.5,308.7 626.7,301.3 626.8,298.8 627.0,308.0 627.1,302.4 627.3,303.1 627.4,304.3 627.6,300.2 627.8,303.1 627.9,304.6 628.1,303.9 628.2,305.3 628.4,305.3 628.5,306.0 628.7,305.4 628.9,299.3 629.0,316.8 629.2,305.7 629.3,303.9 629.5,307.8 629.6,301.2 629.8,307.1 629.9,306.7 630.1,301.0 630.3,307.8 630.4,303.1 630.6,305.2 630.7,308.0 630.9,301.5 631.0,310.6 631.2,299.1 631.4,305.4 631.5,312.8 631.7,312.4 631.8,303.5 632.0,301.3 632.1,304.0 632.3,304.3 632.5,308.0 632.6,303.1 632.8,308.3 632.9,304.5 633.1,305.8 633.2,309.2 633.4,307.0 633.6,300.5 633.7,304.3 633.9,306.2 634.0,304.1 634.2,315.0 634.3,304.8 634.5,307.4 634.7,301.5 634.8,308.2 635.0,307.9 635.1,310.0 635.3,306.0 635.4,309.8 635.6,310.6 635.8,307.2 635.9,303.2 636.1,305.8 636.2,303.1 636.4,306.3 636.5,308.4 636.7,305.4 636.9,306.8 637.0,310.6 637.2,307.1 637.3,306.0 637.5,309.2 637.6,307.4 637.8,320.7 638.0,306.4 638.1,308.4 638.3,302.9 638.4,307.6 638.6,308.0 638.7,307.4 638.9,303.3 639.0,302.2 639.2,311.5 639.4,310.2 639.5,305.7 639.7,305.2 639.8,308.9 640.0,303.7 640.1,314.5 640.3,308.7 640.5,311.5 640.6,307.5 640.8,308.2 640.9,309.7 641.1,300.7 641.2,304.5 641.4,308.6 641.6,300.4 641.7,305.2 641.9,310.0 642.0,301.9 642.2,310.5 642.3,304.8 642.5,310.2 642.7,311.9 642.8,309.2 643.0,306.5 643.1,304.3 643.3,306.6 643.4,303.4 643.6,308.2 643.8,305.5 643.9,311.5 644.1,303.2 644.2,312.1 644.4,303.8 644.5,310.9 644.7,308.3 644.9,310.7 645.0,311.6 645.2,306.0 645.3,307.4 645.5,312.9 645.6,302.3 645.8,302.5 646.0,306.3 646.1,306.0 646.3,309.3 646.4,303.2 646.6,307.5 646.7,312.5 646.9,304.1 647.0,303.2 647.2,311.4 647.4,305.0 647.5,308.3 647.7,303.8 647.8,304.0 648.0,308.6 648.1,304.7 648.3,308.3 648.5,307.7 648.6,304.6 648.8,308.2 648.9,303.3 649.1,308.9 649.2,310.5 649.4,315.8 649.6,306.7 649.7,306.6 649.9,306.4 650.0,302.9 650.2,311.8 650.3,305.8 650.5,305.4 650.7,324.8 650.8,304.6 651.0,306.8 651.1,311.4 651.3,303.3 651.4,308.1 651.6,309.5 651.8,304.7 651.9,309.1 652.1,307.3 652.2,308.5 652.4,305.6 652.5,306.6 652.7,306.9 652.9,321.4 653.0,305.4 653.2,304.1 653.3,308.9 653.5,304.4 653.6,301.1 653.8,315.7 654.0,314.0 654.1,309.1 654.3,307.8 654.4,303.5 654.6,306.9 654.7,309.3 654.9,308.9 655.0,302.7 655.2,304.6 655.4,312.6 655.5,312.5 655.7,301.8 655.8,302.8 656.0,310.6 656.1,309.9 656.3,307.3 656.5,306.0 656.6,306.7 656.8,305.5 656.9,305.7 657.1,307.9 657.2,316.3 657.4,306.6 657.6,304.4 657.7,304.5 657.9,307.7 658.0,310.1 658.2,302.1 658.3,322.2 658.5,309.2 658.7,313.1 658.8,309.3 659.0,309.4 659.1,311.7 659.3,307.0 659.4,315.0 659.6,305.8 659.8,303.5 659.9,309.0 660.1,307.5 660.2,310.5 660.4,303.4 660.5,307.3 660.7,307.2 660.9,303.4 661.0,310.5 661.2,319.0 661.3,303.5 661.5,309.2 661.6,310.8 661.8,306.7 662.0,304.0 662.1,306.3 662.3,312.6 662.4,301.3 662.6,308.4 662.7,303.1 662.9,307.7 663.1,307.9 663.2,306.1 663.4,305.1 663.5,307.6 663.7,311.6 663.8,318.3 664.0,307.5 664.1,304.1 664.3,311.9 664.5,307.4 664.6,324.9 664.8,306.4 664.9,310.8 665.1,305.0 665.2,328.0 665.4,307.4 665.6,319.3 665.7,311.1 665.9,302.9 666.0,314.9 666.2,313.8 666.3,308.8 666.5,310.0 666.7,308.5 666.8,309.2 667.0,310.1 667.1,312.1 667.3,307.3 667.4,304.4 667.6,306.3 667.8,309.6 667.9,307.4 668.1,308.6 668.2,306.8 668.4,309.1 668.5,308.8 668.7,304.8 668.9,308.0 669.0,311.5 669.2,306.5 669.3,306.9 669.5,309.5 669.6,309.1 669.8,305.3 670.0,310.0 670.1,315.6 670.3,308.8 670.4,307.5 670.6,315.0 670.7,317.5 670.9,318.4 671.1,307.5 671.2,305.5 671.4,304.0 671.5,307.6 671.7,311.1 671.8,324.3 672.0,310.4 672.1,308.7 672.3,310.7 672.5,306.1 672.6,306.3 672.8,308.5 672.9,309.3 673.1,304.8 673.2,306.8 673.4,313.3 673.6,305.9 673.7,307.7 673.9,311.2 674.0,308.5 674.2,310.3 674.3,315.8 674.5,305.1 674.7,324.3 674.8,314.2 675.0,306.2 675.1,306.4 675.3,320.8 675.4,305.9 675.6,308.7 675.8,305.8 675.9,329.2 676.1,309.7 676.2,306.4 676.4,303.4 676.5,304.9 676.7,315.3 676.9,312.0 677.0,310.5 677.2,316.3 677.3,313.9 677.5,309.0 677.6,308.8 677.8,310.6 678.0,307.0 678.1,305.6 678.3,306.0 678.4,308.4 678.6,308.5 678.7,314.9 678.9,314.1 679.1,307.3 679.2,308.1 679.4,307.3 679.5,308.1 679.7,308.6 679.8,311.5 680.0,305.9 680.1,305.1 680.3,311.6 680.5,316.5 680.6,308.8 680.8,305.4 680.9,308.0 681.1,306.8 681.2,330.4 681.4,306.8 681.6,314.6 681.7,307.9 681.9,319.9 682.0,323.5 682.2,310.4 682.3,326.3 682.5,312.0 682.7,310.1 682.8,311.0 683.0,306.4 683.1,319.2 683.3,305.7 683.4,312.7 683.6,305.8 683.8,309.3 683.9,314.5 684.1,308.4 684.2,308.3 684.4,310.5 684.5,320.7 684.7,306.2 684.9,315.9 685.0,313.3 685.2,312.8 685.3,306.7 685.5,310.5 685.6,312.0 685.8,308.0 686.0,310.6 686.1,307.0 686.3,314.2 686.4,308.3 686.6,309.3 686.7,307.4 686.9,309.2 687.1,312.3 687.2,316.0 687.4,306.1 687.5,315.6 687.7,308.8 687.8,319.3 688.0,309.0 688.2,315.9 688.3,312.4 688.5,309.3 688.6,305.3 688.8,310.3 688.9,306.7 689.1,307.4 689.2,307.8 689.4,305.0 689.6,307.5 689.7,309.1 689.9,312.6 690.0,312.7 690.2,309.8 690.3,308.0 690.5,304.0 690.7,307.2 690.8,308.3 691.0,305.5 691.1,311.1 691.3,310.0 691.4,311.6 691.6,309.9 691.8,313.7 691.9,311.2 692.1,309.5 692.2,314.5 692.4,309.3 692.5,312.0 692.7,311.6 692.9,309.9 693.0,324.5 693.2,313.1 693.3,310.7 693.5,305.1 693.6,309.2 693.8,308.7 694.0,307.1 694.1,318.7 694.3,309.6 694.4,316.8 694.6,311.1 694.7,312.1 694.9,311.1 695.1,306.4 695.2,312.3 695.4,304.7 695.5,313.1 695.7,316.5 695.8,307.6 696.0,307.5 696.2,306.5 696.3,307.3 696.5,306.5 696.6,312.5 696.8,310.0 696.9,314.0 697.1,309.4 697.2,314.3 697.4,310.3 697.6,312.5 697.7,308.2 697.9,309.1 698.0,305.6 698.2,317.8 698.3,314.1 698.5,314.7 698.7,309.4 698.8,310.3 699.0,308.3 699.1,312.0 699.3,305.9 699.4,304.7 699.6,311.1 699.8,312.6 699.9,306.5 700.1,310.1 700.2,306.7 700.4,315.6 700.5,310.0 700.7,313.8 700.9,319.0 701.0,315.9 701.2,310.9 701.3,313.2 701.5,313.1 701.6,316.3 701.8,311.2 702.0,311.6 702.1,319.1 702.3,309.9 702.4,309.5 702.6,311.9 702.7,308.7 702.9,315.7 703.1,312.7 703.2,305.5 703.4,307.1 703.5,307.8 703.7,310.5 703.8,309.4 704.0,313.4 704.2,309.4 704.3,314.4 704.5,305.4 704.6,312.7 704.8,315.6 704.9,306.8 705.1,323.6 705.2,309.4 705.4,310.2 705.6,313.4 705.7,316.7 705.9,313.0 706.0,310.0 706.2,305.7 706.3,313.2 706.5,307.3 706.7,311.0 706.8,304.9 707.0,314.1 707.1,312.1 707.3,308.6 707.4,310.3 707.6,309.6 707.8,310.7 707.9,312.5 708.1,310.3 708.2,313.4 708.4,310.4 708.5,313.0 708.7,306.8 708.9,313.1 709.0,309.4 709.2,307.4 709.3,312.0 709.5,309.0 709.6,311.7 709.8,309.0 710.0,316.0 710.1,313.0 710.3,309.4 710.4,306.6 710.6,306.7 710.7,310.4 710.9,310.8 711.1,321.8 711.2,314.0 711.4,310.5 711.5,306.6 711.7,316.6 711.8,308.9 712.0,309.3 712.2,319.3 712.3,307.7 712.5,318.7 712.6,307.0 712.8,314.6 712.9,306.7 713.1,309.4 713.3,316.6 713.4,308.0 713.6,315.1 713.7,316.7 713.9,310.2 714.0,309.7 714.2,316.1 714.3,314.3 714.5,315.0 714.7,318.6 714.8,309.5 715.0,308.4 715.1,307.5 715.3,306.6 715.4,316.9 715.6,314.5 715.8,310.4 715.9,310.8 716.1,309.4 716.2,311.1 716.4,311.4 716.5,313.6 716.7,310.9 716.9,317.6 717.0,305.9 717.2,308.5 717.3,316.8 717.5,307.5 717.6,318.6 717.8,309.8 718.0,309.4 718.1,314.4 718.3,315.6 718.4,307.8 718.6,310.7 718.7,310.9 718.9,310.4 719.1,312.2 719.2,304.7 719.4,309.5 719.5,307.8 719.7,308.3 719.8,309.9 720.0,313.2 720.2,310.5 720.3,307.9 720.5,311.6 720.6,317.3 720.8,309.3 720.9,310.5 721.1,317.6 721.3,309.3 721.4,310.9 721.6,313.9 721.7,312.4 721.9,307.3 722.0,313.1 722.2,316.4 722.3,317.4 722.5,306.4 722.7,312.2 722.8,306.9 723.0,308.0 723.1,317.7 723.3,309.7 723.4,311.6 723.6,310.7 723.8,307.4 723.9,323.9 724.1,309.7 724.2,317.5 724.4,307.4 724.5,311.2 724.7,314.4 724.9,318.1 725.0,309.0 725.2,308.8 725.3,308.2 725.5,306.7 725.6,310.6 725.8,308.4 726.0,309.6 726.1,312.5 726.3,307.9 726.4,313.1 726.6,318.2 726.7,312.7 726.9,306.7 727.1,312.0 727.2,310.8 727.4,311.6 727.5,306.5 727.7,310.8 727.8,315.5 728.0,311.0 728.2,311.7 728.3,307.0 728.5,307.7 728.6,309.8 728.8,313.5 728.9,309.0 729.1,311.8 729.3,310.9 729.4,306.7 729.6,315.8 729.7,312.5 729.9,319.5 730.0,312.4 730.2,313.1 730.4,312.9 730.5,313.3 730.7,311.9 730.8,313.2 731.0,310.6 731.1,309.9 731.3,317.2 731.4,315.5 731.6,314.8 731.8,312.7 731.9,314.0 732.1,314.8 732.2,309.7 732.4,313.8 732.5,309.7 732.7,310.3 732.9,311.7 733.0,312.4 733.2,312.3 733.3,317.2 733.5,308.0 733.6,312.4 733.8,313.8 734.0,316.0 734.1,311.1 734.3,306.6 734.4,307.0 734.6,321.1 734.7,306.2 734.9,310.3 735.1,311.8 735.2,315.6 735.4,313.5 735.5,308.0 735.7,308.0 735.8,310.6 736.0,308.5 736.2,310.0 736.3,312.9 736.5,311.4 736.6,308.6 736.8,314.9 736.9,308.7 737.1,310.2 737.3,317.5 737.4,311.3 737.6,311.5 737.7,312.3 737.9,312.0 738.0,319.5 738.2,310.6 738.4,313.5 738.5,307.3 738.7,312.4 738.8,310.9 739.0,320.3 739.1,315.4 739.3,322.3 739.4,315.3 739.6,310.4 739.8,310.0 739.9,323.1 740.1,311.4 740.2,319.6 740.4,311.6 740.5,312.2 740.7,310.7 740.9,309.7 741.0,309.8 741.2,309.6 741.3,313.4 741.5,312.3 741.6,308.6 741.8,310.6 742.0,307.7 742.1,307.0 742.3,308.7 742.4,308.5 742.6,311.8 742.7,308.9 742.9,311.1" fill="none" stroke="#f8f400" stroke-width="0.75" stroke-linejoin="round"/>
</svg>
<div class="yl" style="top:258.8px">0</div>
<div class="yl" style="top:269.6px">-12</div>
<div class="yl" style="top:283.7px">-24</div>
<div class="yl" style="top:297.7px">-36</div>
<div class="yl" style="top:311.8px">-48</div>
<div class="yl" style="top:325.9px">-60</div>
<div class="yl" style="top:340.0px">-72</div>
<div class="yl" style="top:354.1px">-84</div>
<div class="yl" style="top:368.1px">-96</div>
<div class="yl" style="top:382.2px">-108</div>
<div class="yl" style="top:393.5px">-120</div>
<div class="xl" style="left:85.4px">-20 M</div>
<div class="xl" style="left:148.2px">-16 M</div>
<div class="xl" style="left:210.9px">-12 M</div>
<div class="xl" style="left:273.6px">-8 M</div>
<div class="xl" style="left:336.4px">-4 M</div>
<div class="xl" style="left:399.1px">0</div>
<div class="xl" style="left:461.9px">4 M</div>
<div class="xl" style="left:524.6px">8 M</div>
<div class="xl" style="left:587.4px">12 M</div>
<div class="xl" style="left:650.1px">16 M</div>
<div class="xl" style="left:712.9px">20 M</div>
<div class="a" style="left:82.7px;top:327.5px;transform:translate(-50%,-50%) rotate(-90deg);font-size:8.2px;line-height:9px;color:#a8a8ac">Magnitude(dB)</div>
<div class="a" style="left:405px;top:411px;font-size:7.2px;line-height:10px;color:#a8a8ac">Frequency(Hz)</div>
</div></div>
</body></html>
